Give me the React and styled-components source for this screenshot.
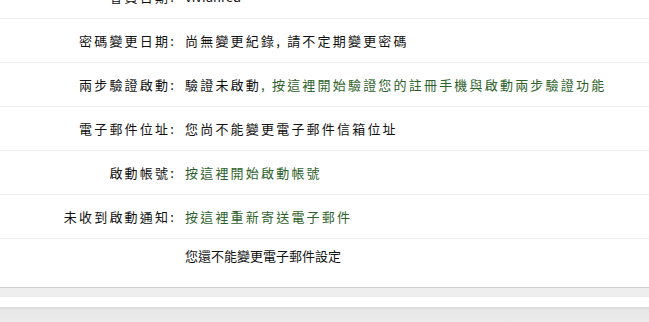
import React from "react";
import styled, { createGlobalStyle } from "styled-components";

const Global = createGlobalStyle`
  html, body { margin: 0; padding: 0; background: #eeeeee; }
  body { font-family: "Noto Sans CJK TC", "Noto Sans", sans-serif; font-size: 13px; color: #000; overflow: hidden; }
`;

const Page = styled.div`
  width: 649px;
  height: 322px;
  overflow: hidden;
  background: #eeeeee;
`;

const Panel = styled.div`
  margin-top: -25px;
  background: #fff;
  border-bottom: 1px solid #cfcfcf;
`;

const Row = styled.div`
  display: grid;
  grid-template-columns: 180px 1fr;
  column-gap: 5px;
  align-items: ${(p) => (p.$top ? "start" : "center")};
  height: ${(p) => (p.$tall ? "48px" : "44px")};
  padding-top: ${(p) => (p.$top ? "8px" : "0")};
  box-sizing: border-box;
  border-bottom: ${(p) => (p.$last ? "none" : "1px solid #efefef")};
  line-height: 18px;
  white-space: nowrap;
  font-size: 13px;
  letter-spacing: ${(p) => (p.$small ? "0" : "2.2px")};
`;

const Label = styled.div`
  text-align: right;
  color: #111;
  margin-right: 4px;
`;

const Value = styled.div`
  color: #111;
  letter-spacing: ${(p) => (p.$latin ? "0" : "inherit")};
`;

const Link = styled.span`
  color: #2f5f2c;
`;

const Gap = styled.div`
  height: 9px;
  background: #eeeeee;
`;

const Strip = styled.div`
  height: 10px;
  background: #fff;
`;

const Footer = styled.div`
  height: 20px;
  background: linear-gradient(#dcdcdc, #e8e8e8 4px, #ececec);
`;

export default function App() {
  return (
    <Page>
      <Global />
      <Panel>
        <Row>
          <Label>會員日期:</Label>
          <Value $latin>vivianred</Value>
        </Row>
        <Row>
          <Label>密碼變更日期:</Label>
          <Value>尚無變更紀錄, 請不定期變更密碼</Value>
        </Row>
        <Row>
          <Label>兩步驗證啟動:</Label>
          <Value>
            驗證未啟動<Link>, 按這裡開始驗證您的註冊手機與啟動兩步驗證功能</Link>
          </Value>
        </Row>
        <Row>
          <Label>電子郵件位址:</Label>
          <Value>您尚不能變更電子郵件信箱位址</Value>
        </Row>
        <Row>
          <Label>啟動帳號:</Label>
          <Value>
            <Link>按這裡開始啟動帳號</Link>
          </Value>
        </Row>
        <Row>
          <Label>未收到啟動通知:</Label>
          <Value>
            <Link>按這裡重新寄送電子郵件</Link>
          </Value>
        </Row>
        <Row $tall $top $last $small>
          <Label />
          <Value>您還不能變更電子郵件設定</Value>
        </Row>
      </Panel>
      <Gap />
      <Strip />
      <Footer />
    </Page>
  );
}
